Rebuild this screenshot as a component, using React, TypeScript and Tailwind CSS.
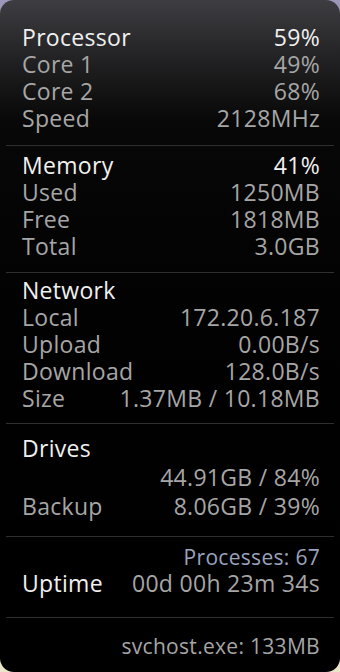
import React from "react";

type Row = { label?: string; value: string; head?: boolean; dim?: boolean };

const Line = ({ label, value, head, dim, h = "h-[27px]" }: Row & { h?: string }) => (
  <div className={`flex ${h} items-center justify-between`}>
    <span className={head ? "text-[#f0f0f0] font-medium" : "text-[#a6a6a6]"}>{label}</span>
    <span className={head && !dim ? "text-[#f0f0f0] font-medium" : "text-[#a6a6a6]"}>{value}</span>
  </div>
);

const Sep = () => <div className="mx-[6px] border-t border-[#2f2f2f]" />;

export default function App() {
  return (
    <div className="h-[672px] w-[340px] bg-gradient-to-b from-[#9c96b8] via-[#b8b6c0] to-[#e9e5c8]">
      <div
        className="flex h-full w-full flex-col overflow-hidden rounded-[14px] bg-gradient-to-b from-[#3e3e42] via-[#080808] via-[18%] to-black text-[23px] leading-none tracking-[0.3px]"
        style={{ fontFamily: '"Open Sans", "Noto Sans", sans-serif' }}
      >
        {/* processor */}
        <div className="px-[20px] pl-[22px] pt-[24px] pb-[13px]">
          <Line label="Processor" value="59%" head />
          <Line label="Core 1" value="49%" />
          <Line label="Core 2" value="68%" />
          <Line label="Speed" value="2128MHz" />
        </div>
        <Sep />

        {/* memory */}
        <div className="px-[20px] pl-[22px] pt-[6px] pb-[12px]">
          <Line label="Memory" value="41%" head />
          <Line label="Used" value="1250MB" />
          <Line label="Free" value="1818MB" />
          <Line label="Total" value="3.0GB" />
        </div>
        <Sep />

        {/* network */}
        <div className="px-[20px] pl-[22px] pt-[4px] pb-[11px]">
          <Line label="Network" value="" head />
          <Line label="Local" value="172.20.6.187" />
          <Line label="Upload" value="0.00B/s" />
          <Line label="Download" value="128.0B/s" />
          <Line label="Size" value="1.37MB / 10.18MB" />
        </div>
        <Sep />

        {/* drives */}
        <div className="px-[20px] pl-[22px] pt-[10px] pb-[15px]">
          <Line label="Drives" value="" head h="h-[29px]" />
          <Line label="" value="44.91GB / 84%" h="h-[29px]" />
          <Line label="Backup" value="8.06GB / 39%" h="h-[29px]" />
        </div>
        <Sep />

        {/* uptime */}
        <div className="px-[20px] pl-[22px] pt-[8px] pb-[20px]">
          <div className="flex h-[24px] items-center justify-end text-[21px] text-[#9ba3bd]">
            Processes: 67
          </div>
          <Line label="Uptime" value="00d 00h 23m 34s" head dim h="h-[28px]" />
        </div>
        <Sep />

        <div className="mt-[14px] flex h-[28px] items-center justify-end px-[20px] text-[21px] text-[#a6a6a6]">
          svchost.exe: 133MB
        </div>
      </div>
    </div>
  );
}
